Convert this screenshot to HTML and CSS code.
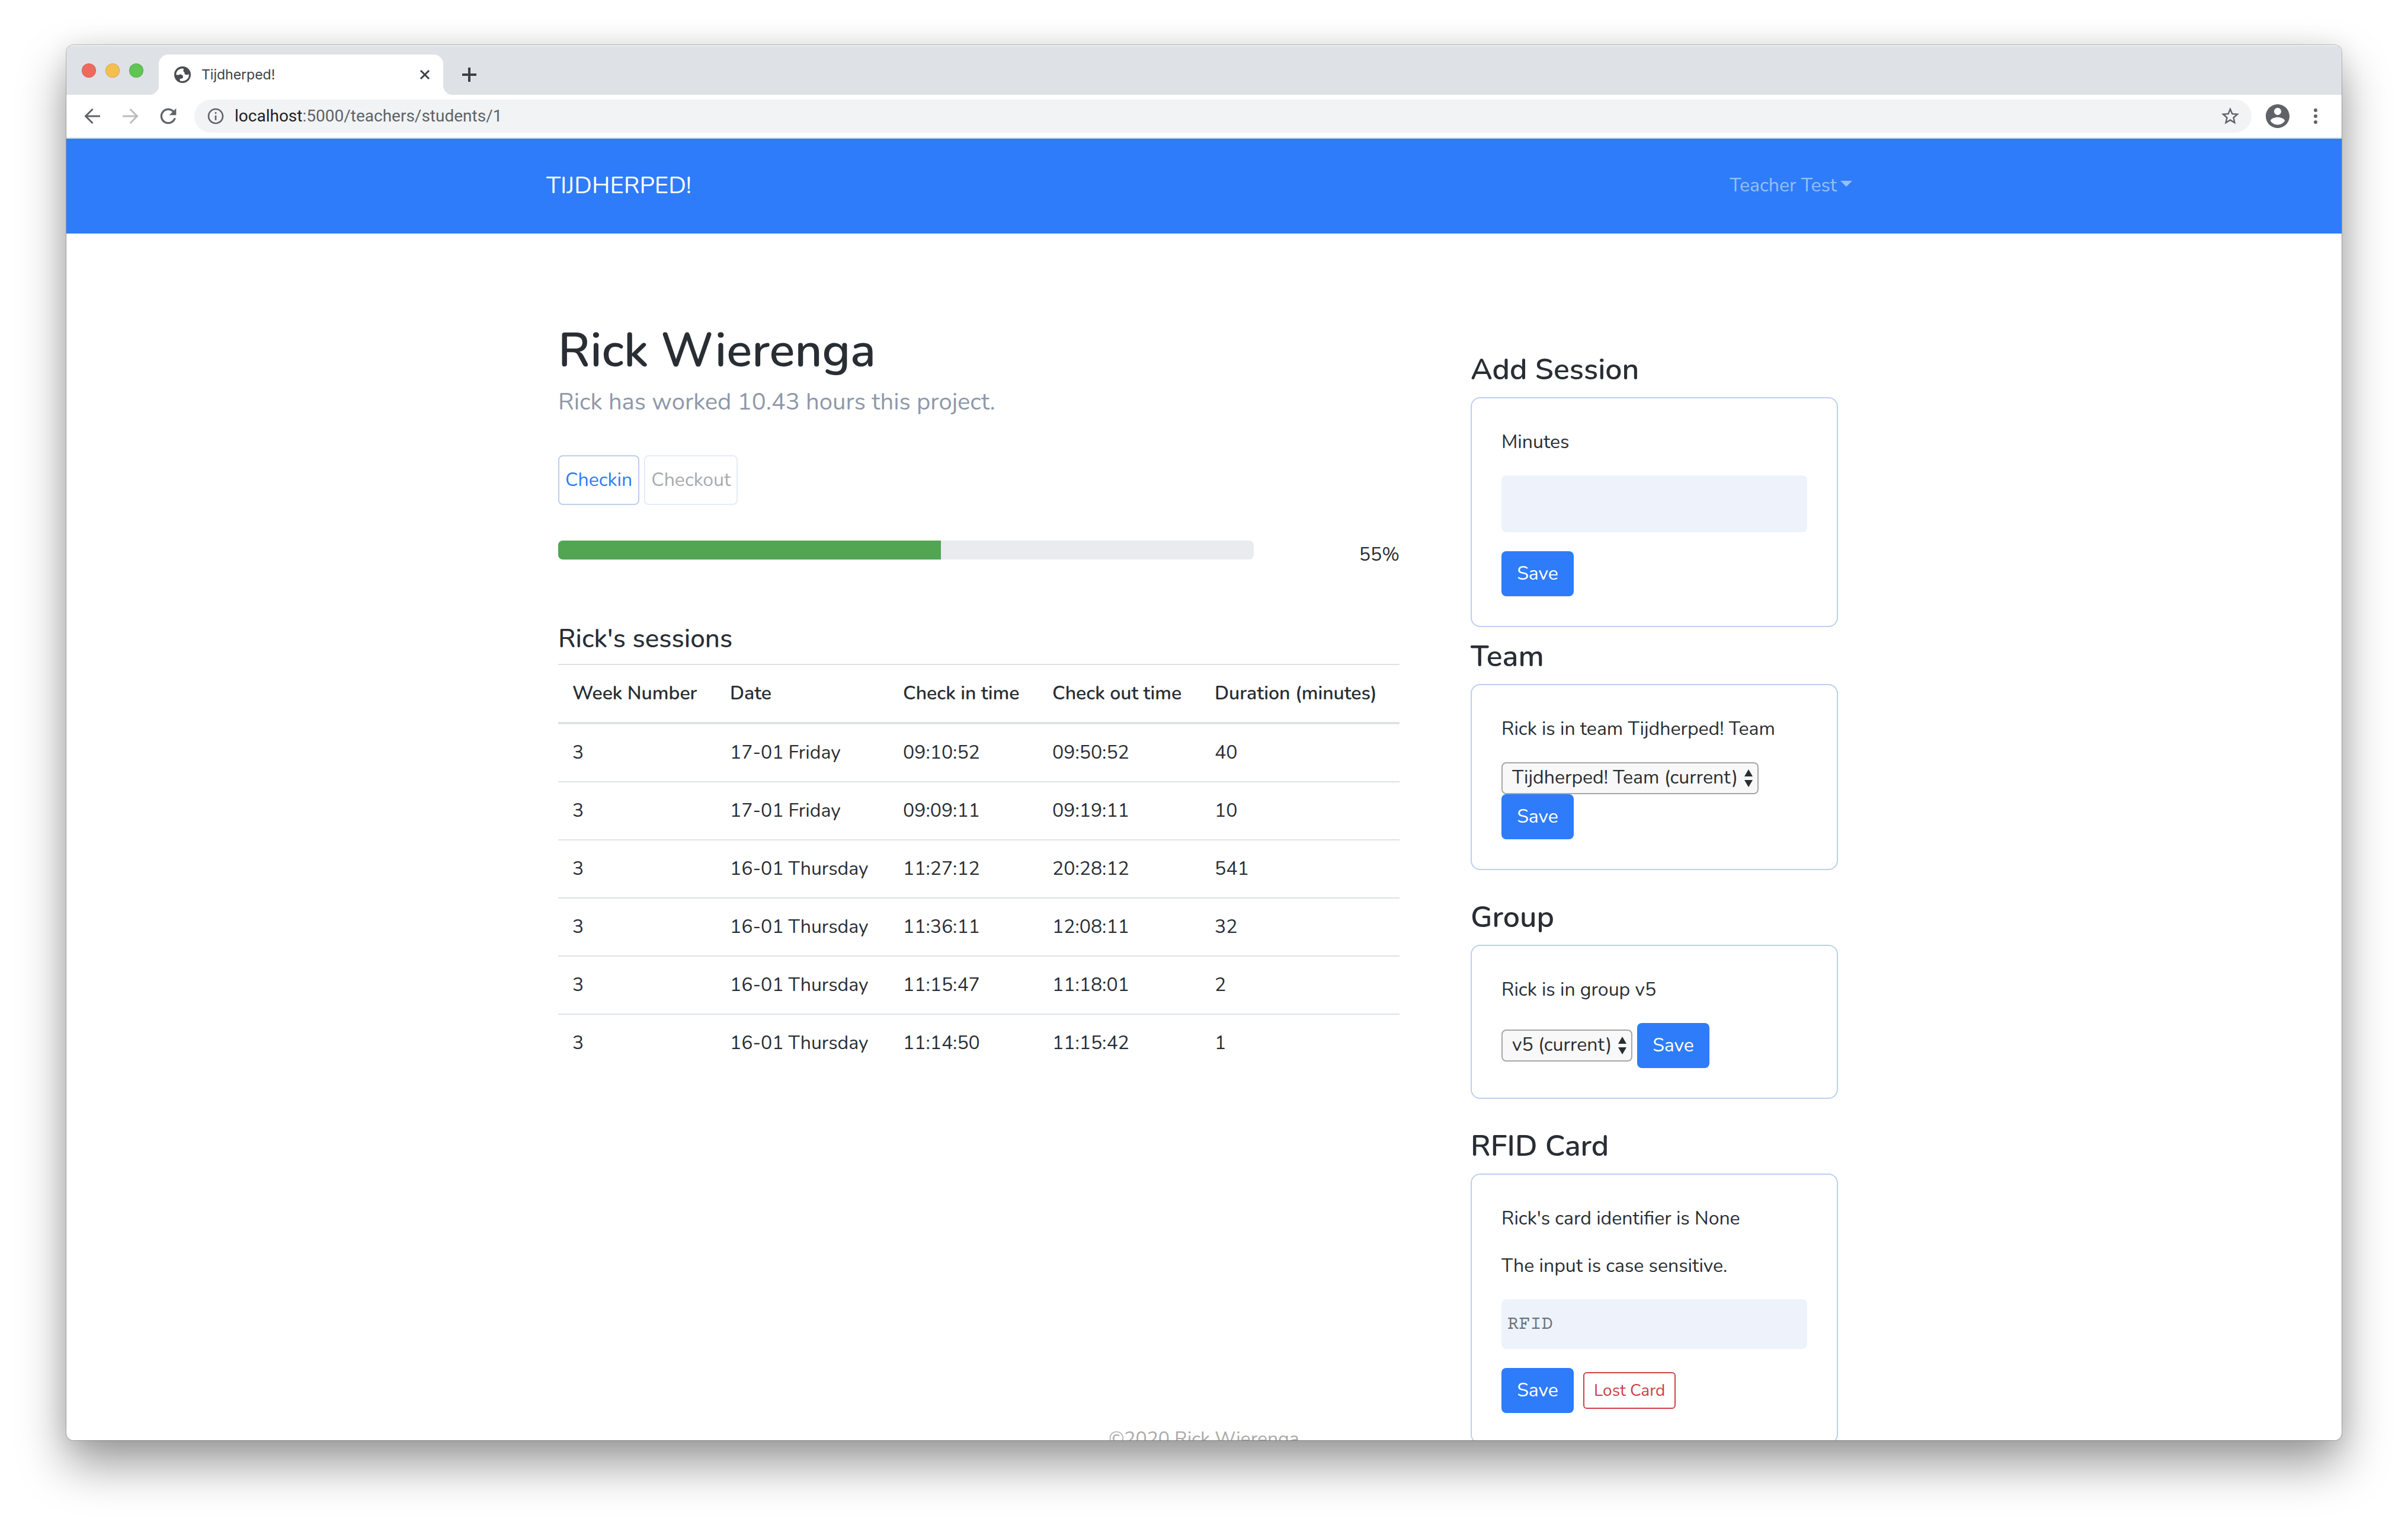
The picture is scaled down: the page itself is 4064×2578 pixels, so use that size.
FILE: index.html
```html
<!DOCTYPE html>
<html lang="en">
<head>
  <meta charset="utf-8">
  <meta name="viewport" content="width=device-width, initial-scale=1">
  <title>Tijdherped!</title>
  <link rel="stylesheet" href="styles.css">
</head>
<body>
  <div class="window">
    <div class="tabstrip">
      <div class="lights">
        <span class="light light-close"></span>
        <span class="light light-minimize"></span>
        <span class="light light-zoom"></span>
      </div>
      <div class="tab">
        <svg class="tab-icon" viewBox="0 0 28 28" aria-hidden="true">
          <circle cx="14" cy="14" r="14" fill="#4a4e53"/>
          <path fill="#fff" d="M3.3 14.2C3.2 10.500 4.600 7.800 7 6C9 4.500 11.500 3.600 14.500 3.600L16.200 4.800L15.200 8L17.300 10.300L17.600 13L20 14.200L24.800 13.400C25 17 24 19.500 21.800 21.600C19 24.600 14 25.600 10 24.400L9.300 21.200L13 20.600L14.800 19.200V16L13.500 14.600L10.800 13.800L10.400 12.800L8 14.400Z"/>
        </svg>
        <span class="tab-title">Tijdherped!</span>
        <button class="icon-button tab-close" type="button" aria-label="Close tab">
          <svg viewBox="0 0 18 18"><path d="M2 2L16 16M16 2L2 16" stroke="#3c4043" stroke-width="3" fill="none"/></svg>
        </button>
      </div>
      <button class="icon-button new-tab" type="button" aria-label="New tab">
        <svg viewBox="0 0 24 24"><path d="M12 0V24M0 12H24" stroke="#3c4043" stroke-width="4" fill="none"/></svg>
      </button>
    </div>

    <div class="toolbar">
      <button class="icon-button tool" type="button" aria-label="Back">
        <svg viewBox="0 0 40 40"><path d="M33 20H9M20.500 8L8.500 20L20.500 32" stroke="#5f6368" stroke-width="3" fill="none"/></svg>
      </button>
      <button class="icon-button tool" type="button" aria-label="Forward">
        <svg viewBox="0 0 40 40"><path d="M7 20H31M19.500 8L31.500 20L19.500 32" stroke="#babcbe" stroke-width="3" fill="none"/></svg>
      </button>
      <button class="icon-button tool" type="button" aria-label="Reload">
        <svg viewBox="0 0 24 24"><path fill="#5f6368" d="M17.650 6.350C16.200 4.900 14.210 4 12 4c-4.420 0-7.990 3.580-7.990 8s3.570 8 7.990 8c3.730 0 6.840-2.550 7.730-6h-2.080c-.82 2.330-3.040 4-5.650 4-3.310 0-6-2.690-6-6s2.690-6 6-6c1.660 0 3.140.69 4.220 1.780L13 11h7V4l-2.350 2.350z"/></svg>
      </button>
      <div class="omnibox">
        <svg class="omnibox-info" viewBox="0 0 24 24" aria-hidden="true"><path fill="#5f6368" d="M11 7h2v2h-2zm0 4h2v6h-2zm1-9C6.480 2 2 6.480 2 12s4.480 10 10 10 10-4.480 10-10S17.520 2 12 2zm0 18c-4.410 0-8-3.590-8-8s3.590-8 8-8 8 3.590 8 8-3.590 8-8 8z"/></svg>
        <span class="url"><span class="url-host">localhost</span>:5000/teachers/students/1</span>
        <svg class="omnibox-star" viewBox="0 0 24 24" aria-hidden="true"><path fill="#5f6368" d="M22 9.240l-7.190-.62L12 2 9.190 8.630 2 9.240l5.460 4.730L5.820 21 12 17.270 18.180 21l-1.630-7.030L22 9.240zM12 15.400l-3.760 2.270 1-4.280-3.320-2.880 4.380-.38L12 6.100l1.710 4.040 4.380.38-3.320 2.880 1 4.280L12 15.400z"/></svg>
      </div>
      <button class="icon-button tool" type="button" aria-label="Profile">
        <svg viewBox="2 2 20 20"><path fill="#5f6368" d="M12 2C6.480 2 2 6.480 2 12s4.480 10 10 10 10-4.480 10-10S17.520 2 12 2zm0 3c1.660 0 3 1.340 3 3s-1.340 3-3 3-3-1.340-3-3 1.340-3 3-3zm0 14.200c-2.500 0-4.710-1.280-6-3.220.030-1.990 4-3.080 6-3.080 1.990 0 5.970 1.090 6 3.080-1.290 1.940-3.500 3.220-6 3.220z"/></svg>
      </button>
      <button class="icon-button tool" type="button" aria-label="Menu">
        <svg viewBox="0 0 40 40"><g fill="#5f6368"><circle cx="20" cy="10" r="3"/><circle cx="20" cy="20" r="3"/><circle cx="20" cy="30" r="3"/></g></svg>
      </button>
    </div>

    <header class="navbar">
      <nav class="navbar-inner">
        <a class="brand" href="#">TIJDHERPED!</a>
        <a class="account" href="#">Teacher Test<span class="caret"></span></a>
      </nav>
    </header>

    <main class="page">
      <div class="content">
        <section class="student">
          <h1 class="student-name">Rick Wierenga</h1>
          <p class="student-summary">Rick has worked 10.43 hours this project.</p>
          <div class="check-buttons">
            <button class="check-button" type="button">Checkin</button>
            <button class="check-button" type="button" disabled>Checkout</button>
          </div>
          <div class="progress-row">
            <div class="progress" role="progressbar" aria-label="Project progress" aria-valuenow="55" aria-valuemin="0" aria-valuemax="100">
              <div class="progress-bar" style="width: 55%"></div>
            </div>
            <span class="progress-value">55%</span>
          </div>
          <h2 class="sessions-title">Rick's sessions</h2>
          <table class="sessions">
            <colgroup><col class="col-week"><col class="col-date"><col class="col-in"><col class="col-out"><col></colgroup>
            <thead>
              <tr><th scope="col">Week Number</th><th scope="col">Date</th><th scope="col">Check in time</th><th scope="col">Check out time</th><th scope="col">Duration (minutes)</th></tr>
            </thead>
            <tbody>
              <tr><td>3</td><td>17-01 Friday</td><td>09:10:52</td><td>09:50:52</td><td>40</td></tr>
              <tr><td>3</td><td>17-01 Friday</td><td>09:09:11</td><td>09:19:11</td><td>10</td></tr>
              <tr><td>3</td><td>16-01 Thursday</td><td>11:27:12</td><td>20:28:12</td><td>541</td></tr>
              <tr><td>3</td><td>16-01 Thursday</td><td>11:36:11</td><td>12:08:11</td><td>32</td></tr>
              <tr><td>3</td><td>16-01 Thursday</td><td>11:15:47</td><td>11:18:01</td><td>2</td></tr>
              <tr><td>3</td><td>16-01 Thursday</td><td>11:14:50</td><td>11:15:42</td><td>1</td></tr>
            </tbody>
          </table>
        </section>

        <aside class="sidebar">
          <section class="panel panel-tight">
            <h2 class="panel-title">Add Session</h2>
            <form class="card">
              <label class="card-text" for="minutes">Minutes</label>
              <input class="field field-tall" id="minutes" type="text">
              <div class="actions"><button class="save" type="button">Save</button></div>
            </form>
          </section>

          <section class="panel">
            <h2 class="panel-title">Team</h2>
            <form class="card">
              <label class="card-text" for="team">Rick is in team Tijdherped! Team</label>
              <div class="actions">
                <span class="picker">
                  <select id="team"><option>Tijdherped! Team (current)</option></select>
                  <svg class="picker-arrows" viewBox="0 0 14 30" aria-hidden="true"><path fill="#292e34" d="M7 0L14 12H0ZM0 18H14L7 30Z"/></svg>
                </span>
                <button class="save" type="button">Save</button>
              </div>
            </form>
          </section>

          <section class="panel">
            <h2 class="panel-title">Group</h2>
            <form class="card">
              <label class="card-text" for="group">Rick is in group v5</label>
              <div class="actions">
                <span class="picker">
                  <select id="group"><option>v5 (current)</option></select>
                  <svg class="picker-arrows" viewBox="0 0 14 30" aria-hidden="true"><path fill="#292e34" d="M7 0L14 12H0ZM0 18H14L7 30Z"/></svg>
                </span>
                <button class="save" type="button">Save</button>
              </div>
            </form>
          </section>

          <section class="panel">
            <h2 class="panel-title">RFID Card</h2>
            <form class="card">
              <p class="card-text">Rick's card identifier is None</p>
              <label class="card-text" for="rfid">The input is case sensitive.</label>
              <input class="field field-code" id="rfid" type="text" placeholder="RFID">
              <div class="actions actions-wide">
                <button class="save" type="button">Save</button>
                <button class="lost" type="button">Lost Card</button>
              </div>
            </form>
          </section>
        </aside>
      </div>
    </main>
    <footer class="footer">©2020 Rick Wierenga</footer>
  </div>
</body>
</html>
```
FILE: styles.css
```css
* {
  box-sizing: border-box;
}

body {
  margin: 0;
  height: 100vh;
  padding: 76px 112px 148px;
  background: #fff;
  color: #292e34;
  font: 400 32px/48px Nunito, Lato, sans-serif;
  overflow: hidden;
}

h1, h2, p {
  margin: 0;
}

button, input, select {
  font: inherit;
  color: inherit;
  margin: 0;
}

a {
  color: inherit;
  text-decoration: none;
}

svg {
  display: block;
}

/* Browser window */

.window {
  display: flex;
  flex-direction: column;
  height: 100%;
  border-radius: 12px;
  background: #fff;
  overflow: hidden;
  box-shadow: 0 0 0 1px rgba(0, 0, 0, .22), 0 0 40px rgba(0, 0, 0, .08), 0 40px 80px rgba(0, 0, 0, .4);
}

.tabstrip {
  display: flex;
  flex-shrink: 0;
  align-items: flex-end;
  height: 84px;
  padding-left: 26px;
  background: #dee1e6;
  border-top: 2px solid #eceef1;
}

.lights {
  display: flex;
  align-self: center;
  gap: 16px;
  margin-right: 26px;
}

.light {
  width: 24px;
  height: 24px;
  border: 1px solid rgba(0, 0, 0, .12);
  border-radius: 50%;
}

.light-close { background: #ee6a5f; }
.light-minimize { background: #f5bf4f; }
.light-zoom { background: #61c554; }

.tab {
  position: relative;
  display: flex;
  align-items: center;
  width: 480px;
  height: 68px;
  padding: 0 22px 0 26px;
  border-radius: 16px 16px 0 0;
  background: #fff;
}

.tab::before,
.tab::after {
  content: "";
  position: absolute;
  bottom: 0;
  width: 16px;
  height: 16px;
}

.tab::before {
  right: 100%;
  background: radial-gradient(circle at 0 0, transparent 16px, #fff 16px);
}

.tab::after {
  left: 100%;
  background: radial-gradient(circle at 100% 0, transparent 16px, #fff 16px);
}

.tab-icon {
  width: 28px;
  height: 28px;
}

.tab-title {
  flex: 1;
  margin-left: 18px;
  color: #3c4043;
  font: 23px/28px Inter, sans-serif;
}

.icon-button {
  flex-shrink: 0;
  padding: 0;
  border: 0;
  background: none;
}

.tab-close { width: 18px; }

.new-tab {
  width: 24px;
  margin: 0 0 22px 32px;
}

.toolbar {
  display: flex;
  flex-shrink: 0;
  align-items: center;
  gap: 24px;
  height: 74px;
  padding: 0 24px;
  background: #fff;
  border-bottom: 2px solid #d8dbdf;
}

.tool { width: 40px; }

.omnibox {
  display: flex;
  flex: 1;
  align-items: center;
  height: 56px;
  padding: 0 18px 0 20px;
  border-radius: 28px;
  background: #f1f3f4;
}

.omnibox-info { width: 32px; }

.url {
  flex: 1;
  margin-left: 16px;
  color: #5f6368;
  font: 28px/36px Roboto, sans-serif;
}

.url-host { color: #202124; }

.omnibox-star { width: 36px; }

/* Site header */

.navbar {
  flex-shrink: 0;
  background: #2e7cf9;
}

.navbar-inner {
  display: flex;
  align-items: center;
  justify-content: space-between;
  max-width: 2280px;
  height: 160px;
  margin: 0 auto;
  padding: 0 46px 2px 30px;
}

.brand {
  color: #fff;
  font-size: 40px;
}

.account {
  display: flex;
  align-items: center;
  gap: 6px;
  color: rgba(255, 255, 255, .5);
}

.caret {
  margin-bottom: 6px;
  border: 10px solid transparent;
  border-top-color: currentColor;
  border-bottom: 0;
}

/* Student page */

.page {
  flex: 1;
  min-height: 0;
  overflow: hidden;
}

.content {
  display: grid;
  grid-template-columns: 1fr 620px;
  gap: 120px;
  max-width: 2280px;
  margin: 0 auto;
  padding: 150px 70px 0 50px;
}

.student-name {
  margin-bottom: 8px;
  font-size: 80px;
  line-height: 96px;
  font-weight: 600;
}

.student-summary {
  margin-bottom: 60px;
  color: #8f98a8;
  font-size: 40px;
  line-height: 60px;
}

.check-buttons {
  display: flex;
  gap: 8px;
  margin-bottom: 60px;
}

.check-button {
  height: 84px;
  padding: 0 10px;
  border: 2px solid #bdcfee;
  border-radius: 8px;
  background: #fff;
  color: #2e7cf9;
}

.check-button:disabled {
  border-color: #e5ebf8;
  color: #a9abae;
}

.progress-row {
  display: flex;
  justify-content: space-between;
  margin-bottom: 92px;
}

.progress {
  flex: 0 1 1174px;
  height: 32px;
  border-radius: 8px;
  background: #e9ebef;
  overflow: hidden;
}

.progress-bar {
  height: 100%;
  background: #52a552;
}

.sessions-title {
  margin-bottom: 16px;
  font-size: 44px;
  line-height: 52px;
  font-weight: 500;
}

.sessions {
  width: 100%;
  table-layout: fixed;
  border-spacing: 0;
  text-align: left;
}

.sessions th,
.sessions td {
  padding: 24px;
  border-top: 2px solid #dee2e6;
  white-space: nowrap;
}

.sessions th {
  border-bottom: 4px solid #dee2e6;
  font-weight: 600;
}

.sessions tbody tr:first-child td { border-top: 0; }

.col-week { width: 266px; }
.col-date { width: 292px; }
.col-in { width: 252px; }
.col-out { width: 274px; }

/* Sidebar */

.sidebar { padding-top: 50px; }

.panel { margin-bottom: 50px; }

.panel-tight { margin-bottom: 20px; }

.panel-title {
  margin-bottom: 16px;
  font-size: 50px;
  line-height: 60px;
  font-weight: 600;
}

.card {
  padding: 50px;
  border: 2px solid #bdcfee;
  border-radius: 16px;
}

.card-text {
  display: block;
  margin-bottom: 32px;
}

.field {
  display: block;
  width: 100%;
  height: 84px;
  margin-bottom: 32px;
  padding: 2px 10px 0;
  border: 0;
  border-radius: 8px;
  background: #eef3fb;
}

.field-tall { height: 96px; }

.field-code { font-family: "Courier Prime", "Liberation Mono", monospace; }

.field::placeholder {
  color: #6c757d;
  opacity: 1;
}

.actions {
  display: flex;
  flex-wrap: wrap;
  align-items: center;
  gap: 0 8px;
}

.actions-wide { gap: 0 16px; }

.save {
  width: 122px;
  height: 76px;
  padding: 0;
  border: 0;
  border-radius: 8px;
  background: #2e7cf9;
  color: #fff;
}

.lost {
  height: 62px;
  padding: 0 16px;
  border: 2px solid #cf4045;
  border-radius: 6px;
  background: #fff;
  color: #cf4045;
  font-size: 28px;
}

.picker {
  display: grid;
  align-items: center;
}

.picker select,
.picker-arrows {
  grid-area: 1 / 1;
}

.picker select {
  appearance: none;
  height: 54px;
  padding: 0 32px 2px 16px;
  border: 2px solid #a6a6a6;
  border-radius: 8px;
  background: #f8f8f8;
}

.picker-arrows {
  justify-self: end;
  width: 14px;
  margin-right: 10px;
  pointer-events: none;
}

/* The footer rides over the last lines of the page */

.footer {
  position: relative;
  flex-shrink: 0;
  height: 26px;
  margin-top: -26px;
  color: #aaa;
  text-align: center;
  overflow: hidden;
}
```
